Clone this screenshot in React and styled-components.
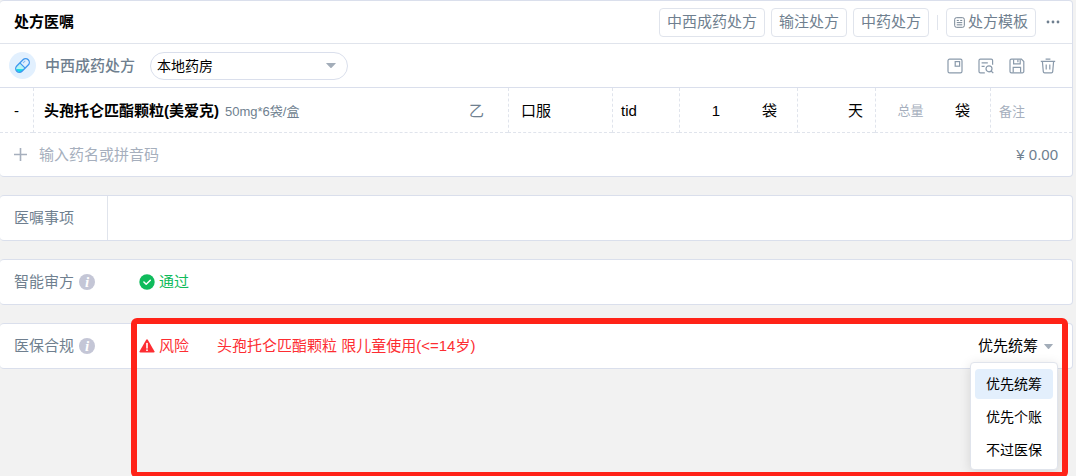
import React, { useState } from 'react';
import styled, { createGlobalStyle, ThemeProvider } from 'styled-components';

const theme = {
  text: '#000000',
  muted: '#6f7f8f',
  light: '#a6afbd',
  icon: '#8a9aab',
  border: '#dadfec',
  line: '#e0e4ec',
  green: '#0fbb5c',
  red: '#fd2d32',
  frame: '#ff2318',
  active: '#e3effc',
};

const GlobalStyle = createGlobalStyle`
  * {
    box-sizing: border-box;
  }

  body {
    margin: 0;
    background: #f2f2f2;
  }

  body, button, input, select {
    font-family: 'Liberation Sans', 'Noto Sans CJK SC', sans-serif;
    font-size: 15px;
    line-height: 20px;
  }
`;

const Page = styled.main`
  display: flex;
  flex-direction: column;
  gap: 18px;
  min-height: 100vh;
  padding-right: 3px;
  overflow: hidden;
`;

const Card = styled.section`
  position: relative;
  background: white;
  border: 1px solid ${props => props.theme.border};
  border-left: 0;
  border-radius: 4px;
`;

const Header = styled.header`
  display: flex;
  align-items: center;
  justify-content: space-between;
  height: 43px;
  padding: 0 12px 0 14px;
  border-bottom: 1px solid ${props => props.theme.line};
`;

const Title = styled.h1`
  margin: 0;
  font-size: 15px;
  font-weight: 700;
`;

const Actions = styled.div`
  display: flex;
  align-items: center;
  gap: ${props => props.$gap}px;
`;

const OutlineButton = styled.button`
  display: flex;
  align-items: center;
  gap: 3px;
  height: 29px;
  padding: 0 7px;
  color: ${props => props.theme.muted};
  background: white;
  border: 1px solid ${props => props.theme.line};
  border-radius: 4px;
  white-space: nowrap;
`;

const Divider = styled.span`
  width: 1px;
  height: 15px;
  margin: 0 2px;
  background: ${props => props.theme.line};
`;

const IconButton = styled.button`
  display: flex;
  padding: 0;
  color: ${props => props.theme.icon};
  background: none;
  border: 0;
`;

const MoreButton = styled(IconButton)`
  margin-left: 4px;
  color: ${props => props.theme.muted};
`;

const Toolbar = styled.div`
  display: flex;
  align-items: center;
  height: 44px;
  padding: 0 16px 0 9px;
  border-bottom: 1px solid ${props => props.theme.border};
`;

const PillBadge = styled.span`
  display: flex;
  align-items: center;
  justify-content: center;
  width: 27px;
  height: 27px;
  border-radius: 50%;
  background: #e2f0fe;
`;

const ToolbarLabel = styled.label`
  margin: 0 15px 0 9px;
  color: ${props => props.theme.muted};
  font-weight: 500;
`;

const SelectBox = styled.div`
  display: grid;
  align-items: center;
  width: 198px;
  margin-right: auto;

  > * {
    grid-area: 1 / 1;
  }

  svg {
    justify-self: end;
    margin-right: 12px;
    pointer-events: none;
  }
`;

const Select = styled.select`
  appearance: none;
  height: 28px;
  padding: 0 28px 0 6px;
  font-size: 14px;
  color: ${props => props.theme.text};
  background: white;
  border: 1px solid ${props => props.theme.border};
  border-radius: 14px;
`;

const DrugTable = styled.table`
  width: 100%;
  table-layout: fixed;
  border-collapse: separate;
  border-spacing: 0;
`;

const Col = styled.col`
  width: ${props => props.$width}px;
`;

const Cell = styled.td`
  height: 45px;
  padding: 2px ${props => props.$right || 0}px 0 ${props => props.$left || 0}px;
  text-align: ${props => props.$align || 'left'};
  border-bottom: 1px dashed ${props => props.theme.line};
  white-space: nowrap;

  & + & {
    border-left: 1px dashed ${props => props.theme.line};
  }
`;

const CellContent = styled.div`
  display: flex;
  align-items: center;
  justify-content: space-between;
  gap: 10px;
`;

const DrugName = styled.strong`
  font-weight: 700;
`;

const Spec = styled.span`
  margin-left: 6px;
  font-size: 13px;
  color: ${props => props.theme.muted};
`;

const Grade = styled.span`
  color: ${props => props.theme.muted};
`;

const TextInput = styled.input`
  flex: 1;
  width: 100%;
  min-width: 0;
  padding: 0;
  color: ${props => props.theme.text};
  font-size: ${props => props.$size || 15}px;
  text-align: ${props => props.$align || 'left'};
  background: none;
  border: 0;
  outline: 0;

  &::placeholder {
    color: ${props => props.theme.light};
    opacity: 1;
  }
`;

const Footer = styled.footer`
  display: flex;
  align-items: center;
  gap: 12px;
  height: 43px;
  padding: 0 14px;
`;

const Price = styled.span`
  color: ${props => props.theme.muted};
`;

const InfoRow = styled.div`
  display: flex;
  align-items: stretch;
  height: 44px;
`;

const RowLabel = styled.label`
  display: flex;
  align-items: center;
  gap: 5px;
  width: 108px;
  padding-left: 14px;
  color: ${props => props.theme.muted};
  border-right: ${props => (props.$divided ? `1px solid ${props.theme.line}` : 0)};
`;

const InfoIcon = styled.span`
  display: flex;
  align-items: center;
  justify-content: center;
  width: 16px;
  height: 16px;
  color: white;
  font: italic 700 15px/16px 'Liberation Serif', serif;
  background: #c4c6d6;
  border-radius: 50%;
`;

const Status = styled.div`
  display: flex;
  align-items: center;
  gap: 4px;
  margin-left: 31px;
  color: ${props => props.theme[props.$tone]};
`;

const Message = styled.span`
  align-self: center;
  margin-left: 28px;
  color: ${props => props.theme.red};
`;

const Payment = styled.div`
  position: relative;
  display: flex;
  margin: 0 15px 0 auto;
`;

const PaymentButton = styled.button`
  display: flex;
  align-items: center;
  gap: 6px;
  padding: 0 4px;
  color: ${props => props.theme.text};
  background: none;
  border: 0;
`;

const Menu = styled.div`
  position: absolute;
  top: 38px;
  right: -1px;
  z-index: 1;
  display: flex;
  flex-direction: column;
  gap: 3px;
  width: 88px;
  padding: 6px 4px 4px;
  background: white;
  border: 1px solid ${props => props.theme.line};
  border-radius: 4px;
  box-shadow: 0 2px 12px rgba(0, 0, 0, 0.12);
`;

const MenuItem = styled.button`
  height: 30px;
  padding: 0;
  font-size: 14px;
  color: ${props => props.theme.text};
  background: ${props => (props.$active ? props.theme.active : 'none')};
  border: 0;
  border-radius: 4px;
`;

const Highlight = styled.div`
  position: absolute;
  top: -6px;
  left: 131px;
  right: 4px;
  z-index: 2;
  height: 160px;
  border: 6px solid ${props => props.theme.frame};
  border-radius: 6px;
  pointer-events: none;
`;

const Icon = ({ size = 16, children }) => (
  <svg
    width={size}
    height={size}
    viewBox="0 0 16 16"
    fill="none"
    stroke="currentColor"
    strokeWidth="1.2"
    aria-hidden="true"
  >
    {children}
  </svg>
);

const Caret = ({ width = 9 }) => (
  <svg width={width} height="5" viewBox="0 0 10 6" preserveAspectRatio="none" aria-hidden="true">
    <path d="M.6 0h8.8q.8 0 .3.7L5.6 5.6q-.6.6-1.2 0L.3.7Q-.2 0 .6 0z" fill="#a3adb9" />
  </svg>
);

const PillIcon = () => (
  <svg width="17" height="17" viewBox="0 0 17 17" fill="none" aria-hidden="true">
    <g transform="rotate(-45 8.5 8.5)">
      <path d="M8 4.8H4.2a3.7 3.7 0 0 0 0 7.4H8z" fill="#b9f5f4" />
      <path d="M1.4 6.5A3.7 3.7 0 0 0 4.2 12.2H7z" fill="#12dbe6" />
      <rect x=".4" y="4.8" width="16.2" height="7.4" rx="3.7" stroke="#3f97ee" strokeWidth="1.3" />
      <path d="M8.5 4.8v7.4" stroke="#3f97ee" strokeWidth="1.2" />
      <path d="M11 7.1h2.4" stroke="#7db8f4" strokeLinecap="round" />
    </g>
  </svg>
);

const TemplateIcon = () => (
  <Icon size={11}>
    <rect x="1" y="1" width="14" height="14" rx="2.5" strokeWidth="1.4" />
    <path d="M4 5h3M9 5h3M4 8.2h8M4 11.4h8" strokeWidth="1.4" />
  </Icon>
);

const MoreIcon = () => (
  <svg width="14" height="4" viewBox="0 0 14 4" fill="currentColor" aria-hidden="true">
    <circle cx="2" cy="2" r="1.4" />
    <circle cx="7" cy="2" r="1.4" />
    <circle cx="12" cy="2" r="1.4" />
  </svg>
);

const CardIcon = () => (
  <Icon>
    <rect x="1" y="1.2" width="14" height="13.6" rx="1.6" />
    <rect x="8.2" y="3.6" width="4.4" height="4.6" />
  </Icon>
);

const SearchListIcon = () => (
  <Icon>
    <path d="M6.8 14.8H2.4A1.4 1.4 0 0 1 1 13.4V2.6a1.4 1.4 0 0 1 1.4-1.4h10.8a1.4 1.4 0 0 1 1.4 1.4v4.2M3.6 4.8h6.2M3.6 8.4h3" />
    <circle cx="11" cy="10.8" r="3" />
    <path d="M13.1 13l2.2 2.2" />
  </Icon>
);

const SaveIcon = () => (
  <Icon>
    <path d="M2.4 1.2h10l2.4 2.4v9.8a1.4 1.4 0 0 1-1.4 1.4h-11A1.4 1.4 0 0 1 1 13.4V2.6a1.4 1.4 0 0 1 1.4-1.4z" />
    <path d="M4.6 1.4v4.4h6.6V1.4M8.9 1.4v2.8M4.2 14.6V9.4h7.4v5.2" />
  </Icon>
);

const TrashIcon = () => (
  <Icon>
    <path d="M.8 3.4h14.4M5.6 1.2h4.8M2.4 3.6l.9 10a1.3 1.3 0 0 0 1.3 1.2h6.8a1.3 1.3 0 0 0 1.3-1.2l.9-10M6.2 6.6v5M9.8 6.6v5" />
  </Icon>
);

const PlusIcon = () => (
  <svg width="13" height="13" viewBox="0 0 13 13" stroke="#a6afbd" strokeWidth="1.6" aria-hidden="true">
    <path d="M6.5 0v13M0 6.5h13" />
  </svg>
);

const CheckIcon = () => (
  <svg width="16" height="16" viewBox="0 0 16 16" fill="none" aria-hidden="true">
    <circle cx="8" cy="8" r="7.7" fill="currentColor" />
    <path d="M4.9 8l2.3 2.3 4.1-4" stroke="white" strokeWidth="1.5" strokeLinecap="round" strokeLinejoin="round" />
  </svg>
);

const WarningIcon = () => (
  <svg width="16" height="16" viewBox="0 0 16 16" aria-hidden="true">
    <path d="M8.8 1.7l6.6 11.5q.5 1.3-.9 1.3h-13Q.1 14.5.6 13.2L7.2 1.7q.8-1 1.6 0z" fill="currentColor" />
    <path d="M8 5.6v4.4" stroke="white" strokeWidth="1.6" strokeLinecap="round" />
    <circle cx="8" cy="12.2" r=".9" fill="white" />
  </svg>
);

const payments = ['优先统筹', '优先个账', '不过医保'];

const Prescription = () => (
  <Card>
    <Header>
      <Title>处方医嘱</Title>
      <Actions $gap={6}>
        <OutlineButton>中西成药处方</OutlineButton>
        <OutlineButton>输注处方</OutlineButton>
        <OutlineButton>中药处方</OutlineButton>
        <Divider />
        <OutlineButton>
          <TemplateIcon />
          处方模板
        </OutlineButton>
        <MoreButton aria-label="更多">
          <MoreIcon />
        </MoreButton>
      </Actions>
    </Header>
    <Toolbar>
      <PillBadge>
        <PillIcon />
      </PillBadge>
      <ToolbarLabel htmlFor="pharmacy">中西成药处方</ToolbarLabel>
      <SelectBox>
        <Select id="pharmacy">
          <option>本地药房</option>
        </Select>
        <Caret width={10} />
      </SelectBox>
      <Actions $gap={15}>
        <IconButton aria-label="卡片">
          <CardIcon />
        </IconButton>
        <IconButton aria-label="查看">
          <SearchListIcon />
        </IconButton>
        <IconButton aria-label="保存">
          <SaveIcon />
        </IconButton>
        <IconButton aria-label="删除">
          <TrashIcon />
        </IconButton>
      </Actions>
    </Toolbar>
    <DrugTable>
      <colgroup>
        <Col $width={33} />
        <col />
        <Col $width={104} />
        <Col $width={67} />
        <Col $width={118} />
        <Col $width={78} />
        <Col $width={115} />
        <Col $width={82} />
      </colgroup>
      <tbody>
        <tr>
          <Cell $align="center">-</Cell>
          <Cell $left={10} $right={24}>
            <CellContent>
              <span>
                <DrugName>头孢托仑匹酯颗粒(美爱克)</DrugName>
                <Spec>50mg*6袋/盒</Spec>
              </span>
              <Grade>乙</Grade>
            </CellContent>
          </Cell>
          <Cell $left={12}>口服</Cell>
          <Cell $left={8}>tid</Cell>
          <Cell $right={20}>
            <CellContent>
              <TextInput aria-label="单次剂量" defaultValue="1" $align="center" />
              袋
            </CellContent>
          </Cell>
          <Cell $right={12}>
            <CellContent>
              <TextInput aria-label="天数" />
              天
            </CellContent>
          </Cell>
          <Cell $right={20}>
            <CellContent>
              <TextInput aria-label="总量" placeholder="总量" $size={13} $align="center" />
              袋
            </CellContent>
          </Cell>
          <Cell $left={8}>
            <TextInput aria-label="备注" placeholder="备注" $size={13} />
          </Cell>
        </tr>
      </tbody>
    </DrugTable>
    <Footer>
      <PlusIcon />
      <TextInput aria-label="输入药名或拼音码" placeholder="输入药名或拼音码" />
      <Price>¥ 0.00</Price>
    </Footer>
  </Card>
);

const PaymentMenu = () => {
  const [open, setOpen] = useState(true);
  const [value, setValue] = useState(payments[0]);

  return (
    <Payment>
      <PaymentButton aria-haspopup="menu" aria-expanded={open} onClick={() => setOpen(!open)}>
        {value}
        <Caret />
      </PaymentButton>
      {open && (
        <Menu role="menu">
          {payments.map(item => (
            <MenuItem
              key={item}
              role="menuitem"
              $active={item === value}
              onClick={() => setValue(item)}
            >
              {item}
            </MenuItem>
          ))}
        </Menu>
      )}
    </Payment>
  );
};

const App = () => (
  <ThemeProvider theme={theme}>
    <GlobalStyle />
    <Page>
      <Prescription />
      <Card>
        <InfoRow>
          <RowLabel htmlFor="advice" $divided>
            医嘱事项
          </RowLabel>
          <TextInput id="advice" />
        </InfoRow>
      </Card>
      <Card>
        <InfoRow>
          <RowLabel as="div">
            智能审方
            <InfoIcon>i</InfoIcon>
          </RowLabel>
          <Status $tone="green">
            <CheckIcon />
            通过
          </Status>
        </InfoRow>
      </Card>
      <Card>
        <InfoRow>
          <RowLabel as="div">
            医保合规
            <InfoIcon>i</InfoIcon>
          </RowLabel>
          <Status $tone="red">
            <WarningIcon />
            风险
          </Status>
          <Message>{'头孢托仑匹酯颗粒 限儿童使用(<=14岁)'}</Message>
          <PaymentMenu />
        </InfoRow>
        <Highlight />
      </Card>
    </Page>
  </ThemeProvider>
);

export default App;
